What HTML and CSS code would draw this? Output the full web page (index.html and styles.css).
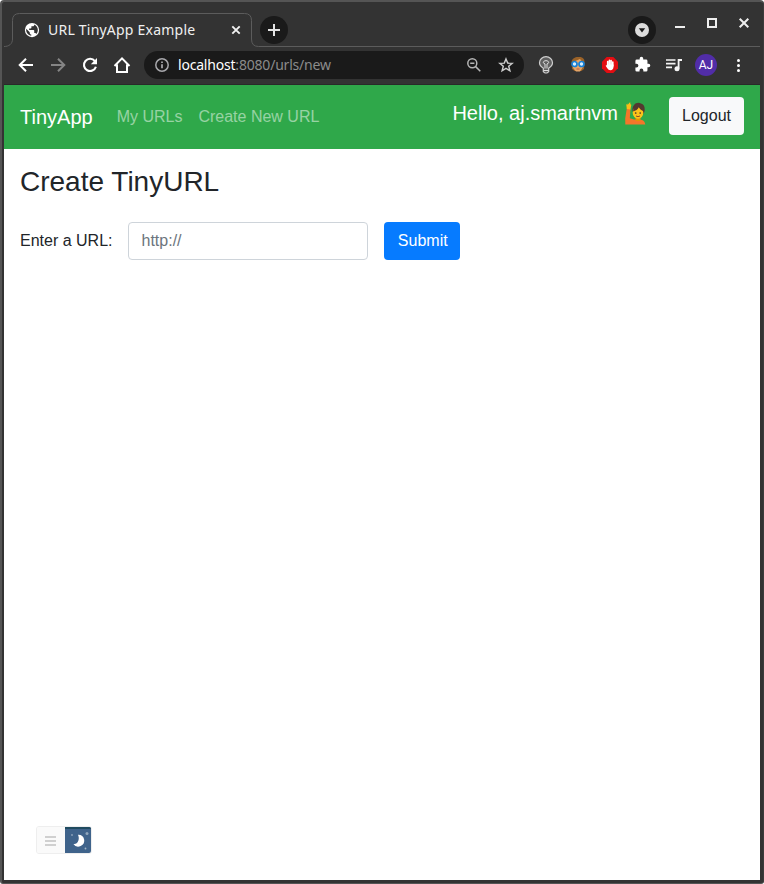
FILE: index.html
```html
<!DOCTYPE html>
<html lang="en">
<head>
<meta charset="utf-8">
<title>URL TinyApp Example</title>
<link rel="stylesheet" href="styles.css">
</head>
<body>
<div class="window">
  <div class="tabstrip">
    <svg class="tab-outline" width="756" height="46" viewBox="4 2 756 46"><path d="M4 46.5C9 46.5 12.500 44 12.500 39V20.500q0-7 7-7H244.500q7 0 7 7V39q0 7.500 7 7.500H760" fill="none" stroke="#5c5c5c"/></svg>
    <div class="tab">
      <svg class="globe" width="18" height="18" viewBox="0 0 24 24"><circle cx="12" cy="12" r="9.500" fill="#fff"/><path fill="#333" d="M4.300 10.200L9 15v1c0 1.100.9 2 2 2v1.600C7.300 19.200 4.200 16 4.200 12zM17.900 17.200c-.3-.8-1-1.300-1.900-1.300h-1v-3c0-.5-.4-1-1-1H8.200v-2h2c.5 0 1-.4 1-1V7h2c1.100 0 1.900-.9 1.900-2v-.2c2.800 1.200 4.700 4 4.700 7.200 0 2-.7 3.800-1.900 5.200z"/></svg>
      <span class="tab-title">URL TinyApp Example</span>
      <svg class="tab-close" width="10" height="10" viewBox="0 0 10 10"><path d="M1.300 1.300l7.400 7.400M8.700 1.300L1.300 8.700" stroke="#f2f2f2" stroke-width="1.900"/></svg>
    </div>
    <div class="round new-tab"><svg width="14" height="14" viewBox="0 0 14 14"><path d="M7 1v12M1 7h12" stroke="#e4e4e4" stroke-width="2"/></svg></div>
    <div class="round tab-search"><svg width="14" height="14" viewBox="0 0 14 14"><circle cx="7" cy="7" r="7" fill="#dcdcdc"/><path d="M3.800 5.200h6.400L7 9.400z" fill="#1a1a1a"/></svg></div>
    <div class="controls">
      <svg width="12" height="12" viewBox="0 0 12 12"><path d="M1 10h10" stroke="#eee" stroke-width="2"/></svg>
      <svg width="12" height="12" viewBox="0 0 12 12"><path d="M2 2h8v8H2z" fill="none" stroke="#eee" stroke-width="2"/></svg>
      <svg width="12" height="12" viewBox="0 0 12 12"><path d="M1.700 1.700l8.600 8.600M10.300 1.700l-8.600 8.600" stroke="#eee" stroke-width="2"/></svg>
    </div>
  </div>

  <div class="toolbar">
    <div class="cell"><svg width="20" height="20" viewBox="0 0 20 20"><path fill="none" stroke="#fff" stroke-width="2" d="M17 10H4.500M10 3.700L3.700 10l6.300 6.300"/></svg></div>
    <div class="cell"><svg width="20" height="20" viewBox="0 0 20 20"><path fill="none" stroke="#858585" stroke-width="2" d="M3 10h12.500M10 3.700l6.300 6.300-6.300 6.300"/></svg></div>
    <div class="cell"><svg width="20" height="20" viewBox="0 0 20 20"><path fill="none" stroke="#fff" stroke-width="2.100" d="M14.900 6.200A6.100 6.100 0 1 0 15.900 11.700"/><path fill="#fff" d="M17 3v6.200h-6.200z"/></svg></div>
    <div class="cell"><svg width="18" height="18" viewBox="0 0 18 18"><path fill="none" stroke="#fff" stroke-width="2" d="M1.500 10L9 2.400 16.500 10M4 8.500V16h10V8.500"/></svg></div>
    <div class="omnibox">
      <svg width="14" height="14" viewBox="0 0 14 14"><circle cx="7" cy="7" r="6.200" fill="none" stroke="#a8a8ac" stroke-width="1.500"/><path d="M7 6.300v4M7 3.500v1.600" stroke="#b4b4b8" stroke-width="1.600"/></svg>
      <span class="address"><span class="host">localhost</span><span class="path">:8080/urls/new</span></span>
      <svg class="zoom-icon" width="14" height="14" viewBox="0 0 14 14"><g fill="none" stroke="#b5b5b5" stroke-width="1.500"><circle cx="5.300" cy="5.300" r="4.500"/><path d="M8.600 8.600l4.700 4.700M3.200 5.300h4.200"/></g></svg>
      <svg width="16" height="16" viewBox="0 0 16 16"><path d="M8 1.900l1.700 4.200 4.500.3-3.500 2.900 1.200 4.500L8 11.400l-3.900 2.400 1.200-4.500-3.500-2.900 4.500-.3z" fill="none" stroke="#ccc" stroke-width="1.400"/></svg>
    </div>
    <div class="cell ext"><svg width="16" height="18" viewBox="0 0 16 18"><path d="M5.300 12.200C2.500 10.500 1.500 9 1.500 6.800a6.500 6.100 0 0 1 13 0c0 2.200-1 3.700-3.800 5.400v3.600L9 17H7l-1.700-1.200z" fill="#606060" stroke="#cfcfcf" stroke-width="1.200"/><path d="M7 12.500V8L5.200 6.700C5.200 4 10.800 4 10.800 6.700L9 8v4.500M5.500 14.500h5" fill="none" stroke="#ddd"/></svg></div>
    <div class="cell ext"><svg width="16" height="17" viewBox="0 0 16 17"><path d="M2 13L1.500 6C2 2 6 .5 9 1c4-.2 6 2.500 5.500 6L14 13l-2.500 2h-7z" fill="#9a6228"/><path d="M3 6l7-3 3 4v4l-3 4.500H6L3 12z" fill="#e5a568"/><circle cx="4.500" cy="8" r="2.500" fill="#d9f0ff" stroke="#1680d8" stroke-width="1.700"/><circle cx="11.500" cy="8" r="2.500" fill="#d9f0ff" stroke="#1680d8" stroke-width="1.700"/><path d="M6.500 13h3" stroke="#bd563b"/></svg></div>
    <div class="cell ext"><svg width="16" height="16" viewBox="0 0 16 16"><path d="M4.700 0h6.600L16 4.700v6.600L11.300 16H4.700L0 11.300V4.700z" fill="#e40d12"/><path d="M5.700 9V4.500M7.400 8V3.200M9.100 8V3.500M10.800 9V5" stroke="#fff" stroke-width="1.600" stroke-linecap="round"/><path d="M5 7.500h6.500V10c0 2-1.200 3.200-3 3.200-1.600 0-2.400-.7-3.200-2L3.600 8.700l1-.5z" fill="#fff"/></svg></div>
    <div class="cell ext"><svg width="17" height="17" viewBox="0 0 24 24"><path fill="#fff" d="M20.500 11H19V7a2 2 0 0 0-2-2h-4V3.500a2.500 2.500 0 0 0-5 0V5H4a2 2 0 0 0-2 2v3.800h1.500a2.700 2.700 0 0 1 0 5.400H2V20a2 2 0 0 0 2 2h3.800v-1.500a2.700 2.700 0 0 1 5.400 0V22H17a2 2 0 0 0 2-2v-4h1.500a2.500 2.500 0 0 0 0-5z"/></svg></div>
    <div class="cell ext"><svg width="16" height="14" viewBox="0 0 16 14"><path d="M0 2h9.500M0 5.700h9.500M0 9.400h6" stroke="#f4f4f4" stroke-width="1.700"/><path d="M12.600 10.500V2H16" fill="none" stroke="#f4f4f4" stroke-width="1.800"/><circle cx="11" cy="10.700" r="2.500" fill="#f4f4f4"/></svg></div>
    <div class="cell ext"><span class="avatar">AJ</span></div>
    <div class="cell ext"><svg width="4" height="14" viewBox="0 0 4 14"><g fill="#fff"><circle cx="2.500" cy="2.500" r="1.500"/><circle cx="2.500" cy="7.500" r="1.500"/><circle cx="2.500" cy="12.500" r="1.500"/></g></svg></div>
  </div>

  <div class="page">
    <nav class="navbar">
      <a class="brand">TinyApp</a>
      <a class="nav-link">My URLs</a>
      <a class="nav-link">Create New URL</a>
      <span class="hello">Hello, aj.smartnvm</span>
      <svg class="wave" width="21" height="23" viewBox="0 0 21 23">
        <path d="M.3 22.500L.2 16.500 1.800 6.500l3.700.6-.7 9.200L9 17.500l7 .2c2.500.3 4 2 4.300 4.800z" fill="#f4762a"/>
        <path d="M1.800 7L1.300 2.800 2.300 1.500l.3 1.500L4.600.4l1 .3-.4 1.200 1.100.8-.8 4.700z" fill="#fbbd16"/>
        <path d="M8.200 10.500C7 8.500 7 5 9 3c1.500-2 4.500-2.800 7-1.500 2.500.8 3.800 3 3.700 5.500.1 2-.4 3.500-1.300 4.500z" fill="#543930"/>
        <path d="M10.500 15h5v3c-1 1.600-4 1.600-5 0z" fill="#e59600"/>
        <ellipse cx="13" cy="10.800" rx="5.300" ry="6" fill="#fcc21b"/>
        <path d="M7.800 9.500c3-.6 5-2 6-4.200 1 2 2.700 3.200 4.800 4L18.500 5l-3-2.700-5 .5z" fill="#543930"/>
        <circle cx="10.700" cy="11" r=".85" fill="#49332c"/><circle cx="15.200" cy="11" r=".85" fill="#49332c"/>
        <path d="M11 14q2 1.300 4 0" stroke="#8d4e26" fill="none"/>
      </svg>
      <button class="btn btn-light">Logout</button>
    </nav>
    <main class="content">
      <h3>Create TinyURL</h3>
      <form class="form">
        <label for="url">Enter a URL:</label>
        <input id="url" type="text" placeholder="http://">
        <button class="btn btn-primary" type="button">Submit</button>
      </form>
    </main>
    <div class="toggle">
      <div class="toggle-menu"><svg width="11" height="10" viewBox="0 0 11 10"><path d="M0 1h11M0 5h11M0 9h11" stroke="#c2c2c2" stroke-width="1.600"/></svg></div>
      <div class="toggle-night"><svg width="26" height="24" viewBox="0 0 26 24"><path d="M13 5.800a5.900 5.900 0 1 1-4.600 9.100C12.500 15.800 15.200 10.500 13 5.800z" fill="#fff"/><circle cx="22" cy="4.500" r="1.500" fill="#8fa5bb"/><circle cx="7" cy="6" r=".9" fill="#8fa5bb"/><circle cx="20.500" cy="19.500" r=".9" fill="#a5b6c7"/></svg></div>
    </div>
  </div>
</div>
</body>
</html>
```
FILE: styles.css
```css
* { box-sizing: border-box; }
body {
  margin: 0;
  background: #fff;
  font-family: "Liberation Sans", Arial, sans-serif;
  font-size: 16px;
  line-height: 24px;
  color: #212529;
}
svg { display: block; flex: none; }
.window {
  height: 884px;
  display: flex;
  flex-direction: column;
  background: #333;
  border: solid #555;
  border-width: 2px 1px 1px 2px;
  border-right-color: #3c3c3c;
  border-radius: 4px 4px 3px 3px;
  padding: 0 3px 3px 2px;
}
.tabstrip {
  position: relative;
  height: 46px;
  display: flex;
  align-items: flex-start;
}
.tab-outline { position: absolute; left: 0; top: 0; }
.tab {
  width: 240px;
  height: 33px;
  margin: 11px 0 0 8px;
  padding: 0 11px;
  display: flex;
  align-items: center;
}
.tab-title {
  margin-left: 7px;
  flex: 1;
  font: 14px/20px "Noto Sans", sans-serif;
  letter-spacing: 0.22px;
  color: #f0f0f0;
  white-space: nowrap;
}
.round {
  width: 28px;
  height: 28px;
  margin-top: 14px;
  border-radius: 50%;
  background: #1a1a1a;
  display: flex;
  align-items: center;
  justify-content: center;
}
.new-tab { margin-left: 8px; }
.tab-search { margin-left: auto; }
.controls {
  display: flex;
  gap: 20px;
  margin: 15px 10px 0 18px;
}
.toolbar {
  height: 37px;
  padding: 0 6px 3px;
  display: flex;
  align-items: center;
  border-bottom: 1px solid #292929;
}
.cell {
  width: 32px;
  height: 28px;
  display: flex;
  align-items: center;
  justify-content: center;
}
.omnibox {
  width: 380px;
  height: 28px;
  margin: 0 6px;
  padding: 0 10px 0 11px;
  border-radius: 14px;
  background: #1a1a1a;
  display: flex;
  align-items: center;
}
.address {
  flex: 1;
  margin-left: 9px;
  font: 14px/20px "Noto Sans", sans-serif;
  letter-spacing: -0.2px;
  white-space: nowrap;
}
.host { color: #fff; }
.path { color: #8b8b8b; }
.zoom-icon { margin-right: 17px; }
.avatar {
  width: 22px;
  height: 22px;
  border-radius: 50%;
  background: #512da8;
  color: #fff;
  font: 12px/22px Roboto, sans-serif;
  text-align: center;
}
.page {
  flex: 1;
  display: flex;
  flex-direction: column;
  background: #fff;
}
.navbar {
  height: 64px;
  padding: 0 16px;
  display: flex;
  align-items: center;
  background: #2fa84a;
}
.brand { font-size: 20px; margin-right: 24px; color: #fff; }
.nav-link { margin-right: 16px; color: rgba(255, 255, 255, 0.5); }
.hello {
  margin: -8px 7px 0 auto;
  font-size: 20px;
  color: #fff;
}
.wave { margin: -7px 23px 0 0; }
.btn {
  height: 38px;
  padding: 0 13px;
  border: 0;
  border-radius: 4px;
  font: 16px/24px "Liberation Sans", Arial, sans-serif;
}
.btn-light { width: 75px; margin-bottom: 2px; background: #f8f9fa; color: #212529; }
.btn-primary { width: 76px; padding: 0 12px 0 13.5px; background: #067bff; color: #fff; }
.content { padding: 16px; }
h3 {
  margin: 0 0 23px;
  font-size: 28px;
  line-height: 34px;
  font-weight: 400;
}
.form { display: flex; align-items: center; gap: 16px; }
.form label { width: 92px; white-space: nowrap; }
.form input {
  width: 240px;
  height: 38px;
  padding: 0 12.5px;
  border: 1px solid #ced4da;
  border-radius: 4px;
  font: 16px/24px "Liberation Sans", Arial, sans-serif;
}
.form input::placeholder { color: #6c757d; }
.toggle {
  width: 56px;
  height: 28px;
  margin: auto 0 26px 32px;
  display: flex;
  border: 1px solid #eee;
  border-radius: 3px;
  overflow: hidden;
}
.toggle-menu {
  width: 28px;
  padding: 1px 2px 0 0;
  background: #fafafa;
  display: flex;
  align-items: center;
  justify-content: center;
}
.toggle-night {
  width: 26px;
  background: #3f638b;
  border-top: 2px solid #204b60;
}
```
